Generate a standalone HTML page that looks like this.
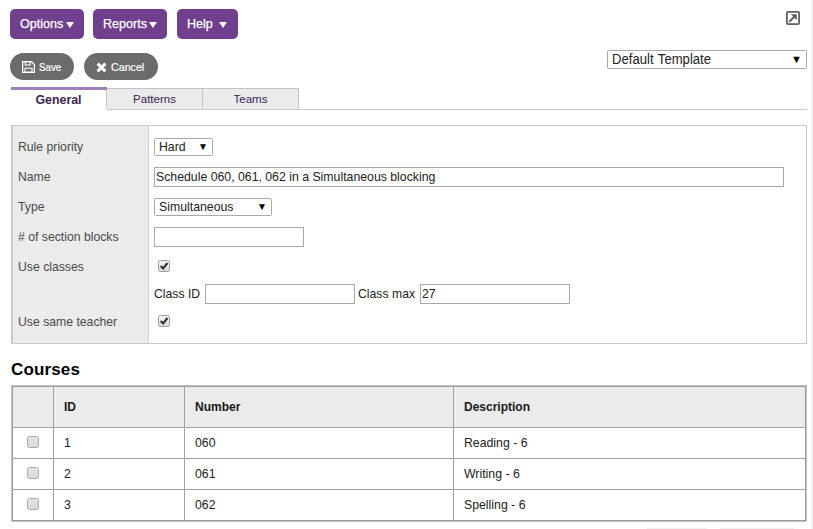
<!DOCTYPE html>
<html><head><meta charset="utf-8">
<style>
html,body{margin:0;padding:0;background:#fff;}
body{width:813px;height:529px;overflow:hidden;position:relative;font-family:"Liberation Sans",sans-serif;font-size:13px;color:#333;}
.abs{position:absolute;}
.t{display:inline-block;transform-origin:0 50%;white-space:nowrap;}
.pbtn{position:absolute;top:9px;height:30px;background:#70408f;border-radius:5px;box-sizing:border-box;}
.pbtn .t{position:absolute;left:10px;top:0;color:#fff;font-size:13px;line-height:29px;transform:scaleX(.965);-webkit-text-stroke:.25px #fff;}
.pbtn i{position:absolute;top:13px;width:0;height:0;border-left:4px solid transparent;border-right:4px solid transparent;border-top:6px solid #fff;}
.gbtn{position:absolute;top:53px;height:27px;background:#6b6b6b;border-radius:14px;box-sizing:border-box;}
.gbtn .t{position:absolute;top:.7px;color:#fff;font-size:11px;line-height:27px;-webkit-text-stroke:.2px #fff;}
.tab{position:absolute;top:88px;height:21px;box-sizing:border-box;background:#ebebeb;border:1px solid #c4c4c4;border-bottom:none;color:#3b2355;font-size:11.5px;line-height:20px;text-align:center;}
.lbl{position:absolute;left:18px;font-size:13px;color:#4a4a4a;line-height:15px;transform:scaleX(.94);transform-origin:0 50%;white-space:nowrap;}
.inp{position:absolute;box-sizing:border-box;border:1px solid #a9a9a9;background:#fff;height:20px;}
.inp .t{position:absolute;left:1px;top:0;font-size:13px;line-height:18px;color:#222;transform:scaleX(.945);}
.sel{position:absolute;box-sizing:border-box;border-radius:1.5px;border:1px solid #a9a9a9;background:#fff;height:18px;}
.sel .t{position:absolute;left:4px;top:0;font-size:13px;line-height:16px;color:#222;transform:scaleX(.945);}
.sel b{position:absolute;right:4px;top:0;font-weight:normal;font-size:10px;line-height:16px;color:#000;}
.cb{position:absolute;width:12px;height:12px;box-sizing:border-box;border:1px solid #9a9a9a;border-radius:2.5px;background:linear-gradient(#f6f6f6,#dadada);}
.cb.u{border-color:#a8a8a8;background:linear-gradient(#e4e4e4,#d8d8d8);}
.td{position:absolute;font-size:13px;color:#222;line-height:15px;transform:scaleX(.945);transform-origin:0 50%;white-space:nowrap;}
.th{position:absolute;font-size:12px;color:#1a1a1a;font-weight:bold;line-height:15px;transform-origin:0 50%;white-space:nowrap;}
.hl{position:absolute;height:1px;background:#a2a2a2;left:12px;width:794px;}
.vl{position:absolute;width:1px;background:#a2a2a2;top:387px;height:133px;}
</style></head><body>

<div class="pbtn" style="left:10px;width:74px;"><span class="t">Options</span><i style="left:56px"></i></div>
<div class="pbtn" style="left:93.4px;width:74px;"><span class="t">Reports</span><i style="left:56px"></i></div>
<div class="pbtn" style="left:177px;width:60.5px;"><span class="t">Help</span><i style="left:42px"></i></div>

<svg class="abs" style="left:786px;top:11px" width="14" height="14" viewBox="0 0 14 14"><rect x=".9" y=".9" width="12.2" height="12.2" rx="1.2" fill="#fff" stroke="#606060" stroke-width="1.8"/><path d="M3.8 10.2 L8.5 5.5" stroke="#606060" stroke-width="2" stroke-linecap="round"/><path d="M4.8 3.2 H10.8 V9.2 Z" fill="#606060"/></svg>

<div class="gbtn" style="left:10px;width:64px;">
<svg class="abs" style="left:12px;top:8px" width="13" height="12" viewBox="0 0 13 12"><path d="M.6 .6 H9.4 L12.4 3.6 V11.4 H.6 Z" fill="none" stroke="#fff" stroke-width="1.4"/><rect x="3" y="7.2" width="7" height="4" fill="none" stroke="#fff" stroke-width="1.1"/><rect x="3.2" y=".8" width="5" height="3.2" fill="none" stroke="#fff" stroke-width="1.1"/></svg>
<span class="t" style="left:29px;transform:scaleX(.89)">Save</span></div>
<div class="gbtn" style="left:84px;width:74px;">
<svg class="abs" style="left:12px;top:9px" width="11" height="11" viewBox="0 0 11 11"><path d="M1.6 1.6 L9.4 9.4 M9.4 1.6 L1.6 9.4" stroke="#fff" stroke-width="3" stroke-linecap="butt"/></svg>
<span class="t" style="left:27px;transform:scaleX(.97)">Cancel</span></div>

<div class="sel" style="left:607px;top:50px;width:200px;height:19px;"><span class="t" style="font-size:14px;line-height:17px;transform:scaleX(.936);word-spacing:1px">Default Template</span><b style="font-size:11px;line-height:17px;top:-.5px">&#9660;</b></div>

<!-- tabs -->
<div class="abs" style="left:107px;top:109px;width:700px;height:1px;background:#c8c8c8;"></div>
<div class="tab" style="left:106px;width:97px;">Patterns</div>
<div class="tab" style="left:202px;width:97px;">Teams</div>
<div class="abs" style="left:11px;top:87px;width:95px;height:23px;background:#fff;border-top:3px solid #a07fbd;box-sizing:border-box;text-align:center;font-size:12.4px;font-weight:bold;color:#3b2355;line-height:20px;">General</div>

<div class="abs" style="left:11px;top:87px;width:96px;height:3px;background:#a07fbd;"></div>
<!-- form panel -->
<div class="abs" style="left:11px;top:125px;width:796px;height:219px;box-sizing:border-box;border:1px solid #c9c9c9;background:#fff;"></div>
<div class="abs" style="left:12px;top:126px;width:135px;height:217px;background:#ebebeb;border-right:1px solid #d0d0d0;border-left:1px solid #c9c9c9;box-sizing:content-box;"></div>
<div class="lbl" style="top:139px;">Rule priority</div>
<div class="lbl" style="top:169px;">Name</div>
<div class="lbl" style="top:199px;">Type</div>
<div class="lbl" style="top:229px;"># of section blocks</div>
<div class="lbl" style="top:259px;">Use classes</div>
<div class="lbl" style="top:314px;">Use same teacher</div>

<div class="sel" style="left:154px;top:138px;width:59px;"><span class="t">Hard</span><b>&#9660;</b></div>
<div class="inp" style="left:154px;top:167px;width:630px;"><span class="t">Schedule 060, 061, 062 in a Simultaneous blocking</span></div>
<div class="sel" style="left:154px;top:198px;width:118px;"><span class="t">Simultaneous</span><b>&#9660;</b></div>
<div class="inp" style="left:154px;top:227px;width:150px;"></div>
<div class="cb" style="left:158px;top:260px;"><svg class="abs" style="left:0;top:0" width="10" height="10" viewBox="0 0 10 10"><path d="M1.7 5 L4.1 7.5 L8.5 2" fill="none" stroke="#333" stroke-width="2.1"/></svg></div>
<div class="lbl" style="left:154px;top:286px;color:#222;">Class ID</div>
<div class="inp" style="left:205px;top:284px;width:150px;"></div>
<div class="lbl" style="left:358px;top:286px;color:#222;">Class max</div>
<div class="inp" style="left:420px;top:284px;width:150px;"><span class="t">27</span></div>
<div class="cb" style="left:158px;top:315px;"><svg class="abs" style="left:0;top:0" width="10" height="10" viewBox="0 0 10 10"><path d="M1.7 5 L4.1 7.5 L8.5 2" fill="none" stroke="#333" stroke-width="2.1"/></svg></div>

<div class="abs" style="left:11px;top:360px;font-size:17px;font-weight:bold;color:#000;line-height:20px;letter-spacing:.15px;">Courses</div>

<!-- table -->
<div class="abs" style="left:11px;top:385px;width:796px;height:137px;box-sizing:border-box;border:1px solid #c6c6c6;background:#fff;"></div><div class="abs" style="left:12px;top:386px;width:794px;height:135px;box-sizing:border-box;border:1px solid #9a9a9a;"></div>
<div class="abs" style="left:13px;top:387px;width:792px;height:40px;background:#ebebeb;"></div>
<div class="hl" style="top:427px;"></div>
<div class="hl" style="top:458px;"></div>
<div class="hl" style="top:489px;"></div>
<div class="vl" style="left:53px;"></div>
<div class="vl" style="left:184px;"></div>
<div class="vl" style="left:453px;"></div>
<div class="th" style="left:64px;top:400px;">ID</div>
<div class="th" style="left:195px;top:400px;">Number</div>
<div class="th" style="left:464px;top:400px;">Description</div>
<div class="td" style="left:64px;top:435px;">1</div>
<div class="td" style="left:195px;top:435px;">060</div>
<div class="td" style="left:464px;top:435px;">Reading - 6</div>
<div class="td" style="left:64px;top:466px;">2</div>
<div class="td" style="left:195px;top:466px;">061</div>
<div class="td" style="left:464px;top:466px;">Writing - 6</div>
<div class="td" style="left:64px;top:497px;">3</div>
<div class="td" style="left:195px;top:497px;">062</div>
<div class="td" style="left:464px;top:497px;">Spelling - 6</div>
<div class="cb u" style="left:27px;top:436px;"></div>
<div class="cb u" style="left:27px;top:467px;"></div>
<div class="cb u" style="left:27px;top:498px;"></div>

<!-- right edge line -->
<div class="abs" style="left:811px;top:0;width:1px;height:529px;background:#f7f7f7;"></div><div class="abs" style="left:812px;top:0;width:1px;height:529px;background:#ececec;"></div>
<div class="abs" style="left:647px;top:528px;width:60px;height:1px;background:#f1f1f1;"></div><div class="abs" style="left:720px;top:528px;width:74px;height:1px;background:#f1f1f1;"></div>
</body></html>
